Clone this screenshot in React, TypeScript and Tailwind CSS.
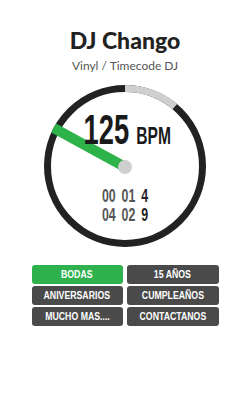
import React from "react";

const buttons = [
  { label: "BODAS", active: true },
  { label: "15 AÑOS", active: false },
  { label: "ANIVERSARIOS", active: false },
  { label: "CUMPLEAÑOS", active: false },
  { label: "MUCHO MAS....", active: false },
  { label: "CONTACTANOS", active: false },
];

function Dial() {
  return (
    <svg viewBox="0 0 162 162" className="absolute inset-0 w-full h-full">
      <defs>
        <clipPath id="dial-clip">
          <circle cx="81" cy="81" r="81" />
        </clipPath>
      </defs>
      <circle cx="81" cy="81" r="77.5" fill="none" stroke="#222" strokeWidth="7" />
      <path d="M81 3.5 A77.5 77.5 0 0 1 130.8 21.6" fill="none" stroke="#cfcfcf" strokeWidth="7" />
      <g clipPath="url(#dial-clip)">
        <line x1="81" y1="82" x2="6" y2="41" stroke="#2db34a" strokeWidth="10" />
      </g>
      <circle cx="81" cy="82" r="7" fill="#cfcfcf" />
    </svg>
  );
}

export default function App() {
  return (
    <div className="w-[250px] h-[416px] bg-white flex flex-col items-center pt-6">
      {/* Header */}
      <h1 className="text-[23px] leading-8 font-black text-[#222] font-['Lato',sans-serif]">DJ Chango</h1>
      <p className="text-[12px] leading-4 text-[#555] font-['Lato',sans-serif] mt-[2px]">Vinyl / Timecode DJ</p>

      {/* Dial */}
      <div className="relative w-[162px] h-[162px] mt-[11px]">
        <Dial />
        <div className="relative flex flex-col items-center pt-[24px] scale-x-[0.65] font-['Liberation_Sans',sans-serif] font-bold">
          <div className="flex items-baseline gap-[11px] pl-[7px]">
            <span className="text-[42px] leading-[42px] text-[#1a1a1a]">125</span>
            <span className="text-[24px] leading-[24px] text-[#1a1a1a]">BPM</span>
          </div>
          <div className="mt-[35px] flex flex-col items-center text-[19px] leading-[19px]">
            <div className="flex gap-[9px]">
              <span className="text-[#555]">00</span>
              <span className="text-[#555]">01</span>
              <span className="text-[#222]">4</span>
            </div>
            <div className="flex gap-[9px]">
              <span className="text-[#555]">04</span>
              <span className="text-[#555]">02</span>
              <span className="text-[#222]">9</span>
            </div>
          </div>
        </div>
      </div>

      {/* Menu */}
      <div className="grid grid-cols-2 gap-x-1 gap-y-[2px] w-[187px] mt-[18px]">
        {buttons.map((b) => (
          <button
            key={b.label}
            className={`h-[19px] rounded-[3px] flex items-center justify-center text-white ${
              b.active ? "bg-[#2fb24d]" : "bg-[#4a4a4a]"
            }`}
          >
            <span className="text-[11.5px] font-bold font-['Liberation_Sans',sans-serif] scale-x-[0.76] whitespace-nowrap">
              {b.label}
            </span>
          </button>
        ))}
      </div>
    </div>
  );
}
